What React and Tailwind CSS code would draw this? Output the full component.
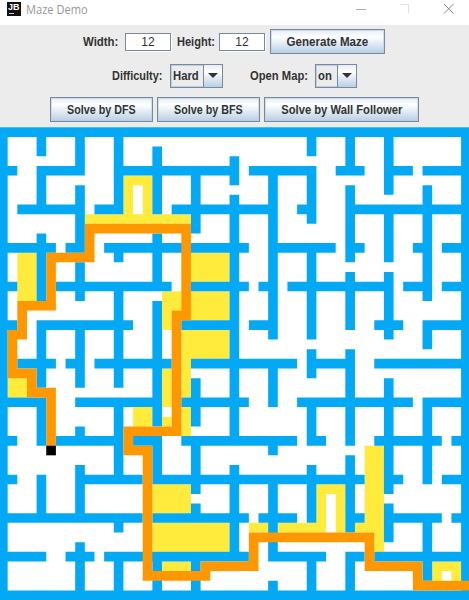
import React from "react";

// Horizontal walls: row -> [start, end) column spans, in grid units.
const H_WALLS = {
  0: [[0, 49]],
  4: [[0, 2], [4, 9], [12, 25], [26, 33], [35, 38], [40, 43], [44, 49]],
  8: [[2, 9], [10, 13], [18, 29], [31, 33], [36, 49]],
  12: [[0, 6], [7, 9], [11, 26], [28, 35], [36, 38], [43, 45], [46, 49]],
  16: [[0, 2], [6, 18], [20, 26], [27, 29], [30, 41], [42, 45], [46, 49]],
  20: [[0, 2], [4, 14], [19, 25], [26, 29], [39, 42], [44, 49]],
  24: [[2, 6], [7, 9], [10, 18], [20, 31], [32, 37], [39, 49]],
  28: [[0, 5], [8, 17], [19, 26], [31, 43], [44, 49]],
  32: [[0, 2], [6, 13], [14, 17], [19, 31], [32, 34], [39, 46], [47, 49]],
  36: [[0, 2], [8, 15], [16, 38], [40, 42], [46, 49]],
  40: [[0, 15], [16, 26], [27, 31], [36, 38], [40, 46], [47, 49]],
  44: [[0, 5], [7, 10], [11, 26], [28, 34], [36, 38], [39, 49]],
  48: [[0, 49]],
};

// Vertical walls: column -> [start, end) row spans.
const V_WALLS = {
  0: [[0, 49]],
  4: [[0, 3], [4, 9], [11, 18], [20, 27], [28, 33], [36, 41]],
  8: [[0, 5], [6, 13], [14, 18], [20, 27], [31, 33], [35, 41], [43, 49]],
  12: [[0, 9], [12, 14], [16, 27], [28, 37], [40, 42], [44, 49]],
  16: [[2, 9], [11, 17], [18, 31], [32, 37], [44, 49]],
  20: [[4, 11], [26, 31], [32, 38], [39, 41], [44, 49]],
  24: [[3, 6], [7, 33], [35, 45]],
  28: [[4, 22], [24, 29], [32, 34], [36, 45], [47, 49]],
  32: [[0, 3], [4, 10], [12, 22], [23, 26], [28, 33], [35, 41], [44, 49]],
  36: [[0, 5], [6, 14], [15, 21], [23, 33], [34, 42], [44, 49]],
  40: [[0, 7], [8, 14], [15, 22], [26, 38], [39, 43]],
  44: [[6, 18], [20, 23], [28, 37], [40, 47]],
  48: [[0, 49]],
};

// Areas as [left, top, right, bottom].
const VISITED = [
  [9, 9, 20, 10], [13, 5, 14, 10], [14, 5, 15, 6], [15, 5, 16, 10],
  [2, 13, 4, 18], [20, 13, 24, 16], [20, 17, 24, 20], [17, 17, 19, 19],
  [17, 19, 18, 21], [19, 21, 24, 24], [19, 24, 20, 28], [17, 25, 18, 29],
  [17, 30, 18, 31], [19, 29, 20, 32], [1, 26, 3, 28], [14, 29, 16, 31],
  [16, 37, 20, 40], [16, 41, 24, 44], [17, 45, 20, 46], [26, 41, 28, 42],
  [29, 41, 34, 42], [33, 37, 34, 42], [34, 37, 35, 38], [35, 37, 36, 42],
  [38, 33, 40, 42], [37, 41, 39, 42], [39, 42, 40, 44],
  [45, 45, 46, 47], [46, 45, 47, 46], [47, 45, 48, 47],
];

const PATH = [
  [9, 10, 20, 11], [9, 10, 10, 14], [5, 13, 10, 14], [5, 13, 6, 19],
  [2, 18, 6, 19], [2, 18, 3, 22], [1, 21, 3, 22], [1, 21, 2, 26],
  [1, 25, 4, 26], [3, 25, 4, 28], [3, 27, 6, 28], [5, 27, 6, 33],
  [19, 10, 20, 20], [18, 19, 20, 20], [18, 19, 19, 32], [13, 31, 19, 32],
  [13, 31, 14, 34], [13, 33, 16, 34], [15, 33, 16, 47], [15, 46, 22, 47],
  [21, 45, 27, 46], [26, 42, 27, 46], [26, 42, 39, 43], [38, 42, 39, 46],
  [38, 45, 44, 46], [43, 45, 44, 48], [43, 47, 49, 48],
];

const WALLS = [
  ...Object.entries(H_WALLS).flatMap(([r, s]) => s.map(([a, b]) => [a, +r, b, +r + 1])),
  ...Object.entries(V_WALLS).flatMap(([c, s]) => s.map(([a, b]) => [+c, a, +c + 1, b])),
];

const toPath = (rects) =>
  rects.map(([l, t, r, b]) => `M${l} ${t}H${r}V${b}H${l}Z`).join("");

function Maze() {
  return (
    <svg className="block" width="469" height="473" viewBox="0 0 469 473">
      <rect width="469" height="473" fill="#fff" />
      <g transform="translate(-2 .3) scale(9.648)">
        <path d={toPath(VISITED)} fill="#ffeb3b" />
        <path d={toPath(WALLS)} fill="#03a9f4" />
        <path d={toPath(PATH)} fill="#ff9800" />
        <path d={toPath([[5, 33, 6, 34]])} fill="#000" />
      </g>
    </svg>
  );
}

function Label({ children, width, scale }) {
  return (
    <span className={`shrink-0 whitespace-nowrap ${width}`}>
      <span className={`inline-block origin-left ${scale}`}>{children}</span>
    </span>
  );
}

function Button({ children, width, scale }) {
  return (
    <button
      className={`flex h-[25px] shrink-0 items-center justify-center whitespace-nowrap border border-[#7a8a99] bg-linear-to-b from-[#e4edf6] via-white via-30% to-[#b8cfe5] p-0 pt-px font-bold shadow-[inset_0_0_0_1px_#b8cfe599] ${width}`}
    >
      <span className={`inline-block ${scale}`}>{children}</span>
    </button>
  );
}

function Field({ value }) {
  return (
    <div className="flex h-[18px] w-[46px] shrink-0 items-center justify-center border border-[#7a8a99] bg-white pt-px font-normal shadow-[1px_1px_0_#fff]">
      {value}
    </div>
  );
}

function Combo({ value, width }) {
  return (
    <div
      className={`flex h-6 shrink-0 border border-[#7a8a99] shadow-[inset_0_0_0_1px_#b8cfe5] ${width}`}
    >
      <span className="flex flex-1 items-center pl-[2px]">
        <span className="inline-block origin-left scale-x-[0.94]">{value}</span>
      </span>
      <span className="flex w-[19px] items-center justify-center border-l border-[#7a8a99] bg-linear-to-b from-[#e4edf6] via-white via-30% to-[#b8cfe5]">
        <svg width="10" height="5" viewBox="0 0 10 5">
          <path d="M0 0H10L5 5Z" fill="#333" />
        </svg>
      </span>
    </div>
  );
}

export default function App() {
  return (
    <div className="h-[600px] w-[469px] overflow-hidden bg-[#ececec] [font-family:'Liberation_Sans',Arial,sans-serif] text-[12px] leading-none font-bold text-[#333]">
      <header className="flex h-[25px] bg-white">
        <div className="mt-[2px] ml-[7px] flex h-[14px] w-[14px] flex-col bg-[#111] pt-px pl-[1px] text-[9px] leading-[9px] font-bold text-white">
          <span>JB</span>
          <span className="mt-px ml-[1px] h-px w-[5px] bg-[#ccc]" />
        </div>
        <div className="ml-[5px] h-[18px] flex-1 [font-family:'Open_Sans',sans-serif] text-[12px] leading-[19px] font-normal text-[#999]">
          <span className="inline-block origin-left scale-x-[0.925]">Maze Demo</span>
        </div>
        <svg width="114" height="25" viewBox="355 0 114 25" fill="none">
          <path d="M356 9.5H366" stroke="#aaa" />
          <path d="M400 4.5H408.500V13" stroke="#e2e2e2" />
          <path d="M444 4L453.500 13.500M453.500 4L444 13.500" stroke="#888" />
        </svg>
      </header>
      <section className="h-[102px]">
        <div className="flex h-[33px] items-center pl-[83px]">
          <Label width="w-[42px]" scale="scale-x-[0.95]">Width:</Label>
          <Field value="12" />
          <Label width="ml-[6px] w-[42px]" scale="scale-x-[0.92]">Height:</Label>
          <Field value="12" />
          <span className="w-[5px]" />
          <Button width="w-[115px]" scale="scale-x-[0.965]">Generate Maze</Button>
        </div>
        <div className="flex h-[35px] items-center pl-[112px]">
          <Label width="w-[58px]" scale="scale-x-[0.91]">Difficulty:</Label>
          <Combo value="Hard" width="w-[53px]" />
          <Label width="ml-[27px] w-[65px]" scale="scale-x-[0.935]">Open Map:</Label>
          <Combo value="on" width="w-[42px]" />
        </div>
        <div className="flex h-[34px] items-center gap-[4px] pb-px pl-[50px]">
          <Button width="w-[103px]" scale="scale-x-[0.895]">Solve by DFS</Button>
          <Button width="w-[103px]" scale="scale-x-[0.895]">Solve by BFS</Button>
          <Button width="w-[155px]" scale="scale-x-[0.935]">Solve by Wall Follower</Button>
        </div>
      </section>
      <Maze />
    </div>
  );
}
